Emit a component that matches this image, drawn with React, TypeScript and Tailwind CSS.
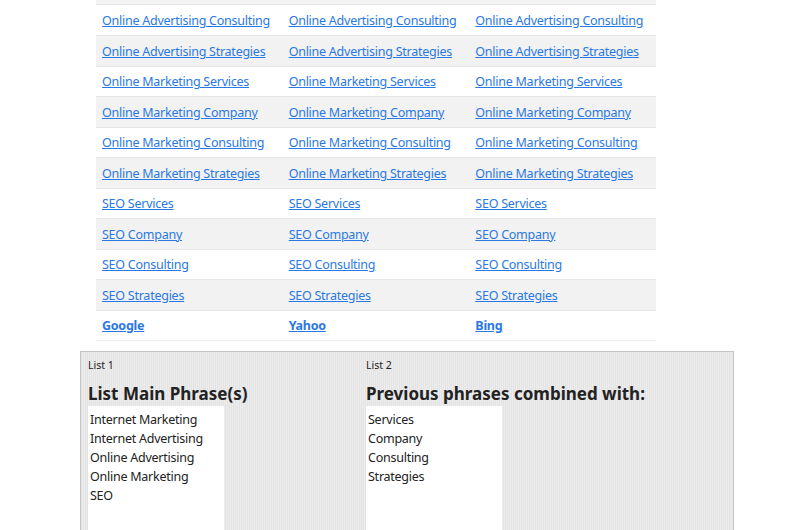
const keywords = [
  "Online Advertising Consulting",
  "Online Advertising Strategies",
  "Online Marketing Services",
  "Online Marketing Company",
  "Online Marketing Consulting",
  "Online Marketing Strategies",
  "SEO Services",
  "SEO Company",
  "SEO Consulting",
  "SEO Strategies",
];

const engines = ["Google", "Yahoo", "Bing"];

const list1 = [
  "Internet Marketing",
  "Internet Advertising",
  "Online Advertising",
  "Online Marketing",
  "SEO",
];
const list2 = ["Services", "Company", "Consulting", "Strategies"];

function ListColumn({ label, title, items }: { label: string; title: string; items: string[] }) {
  return (
    <div className="flex flex-col">
      <div className="text-[10.5px] text-[#222] leading-[14px] mt-[6px]">{label}</div>
      <h2 className="text-[17px] font-bold text-[#222] leading-[24px] mt-[10px]">{title}</h2>
      <div className="bg-white w-[136px] h-[140px] px-[2px] pt-[4px] text-[12.5px] tracking-[-0.25px] leading-[19px] text-[#222]">
        {items.map((item) => (
          <div key={item}>{item}</div>
        ))}
      </div>
    </div>
  );
}

export default function App() {
  return (
    <div
      className="w-[800px] h-[530px] overflow-hidden bg-white"
      style={{ fontFamily: '"Noto Sans", "Open Sans", sans-serif' }}
    >
      <div className="ml-[96px] w-[560px] h-[5px] bg-[#f2f2f2] border-b border-[#e6e6e6]" />
      <table className="ml-[96px] w-[560px] border-collapse table-fixed text-[12.5px] tracking-[-0.25px]">
        <tbody>
          {keywords.map((k, i) => (
            <tr
              key={k}
              className={`h-[30.5px] border-b border-[#e6e6e6] ${i % 2 === 1 ? "bg-[#f2f2f2]" : "bg-white"}`}
            >
              {[0, 1, 2].map((c) => (
                <td key={c} className="pl-[6px] pt-[3px] align-middle">
                  <a href="#" className="text-[#2a78e4] underline whitespace-nowrap">
                    {k}
                  </a>
                </td>
              ))}
            </tr>
          ))}
          <tr className="h-[30.5px] border-b border-[#eeeeee] bg-white">
            {engines.map((e) => (
              <td key={e} className="pl-[6px] pt-[3px] align-middle">
                <a href="#" className="text-[#2a78e4] underline font-bold">
                  {e}
                </a>
              </td>
            ))}
          </tr>
        </tbody>
      </table>
      <div className="ml-[80px] mt-[10px] w-[654px] h-[200px] border border-[#c4c4c4] bg-[#e8e8e8] bg-[repeating-linear-gradient(90deg,#e4e4e4_0px,#e4e4e4_1px,#ececec_1px,#ececec_2px)] pl-[7px] grid grid-cols-[278px_1fr]">
        <ListColumn label="List 1" title="List Main Phrase(s)" items={list1} />
        <ListColumn label="List 2" title="Previous phrases combined with:" items={list2} />
      </div>
    </div>
  );
}
